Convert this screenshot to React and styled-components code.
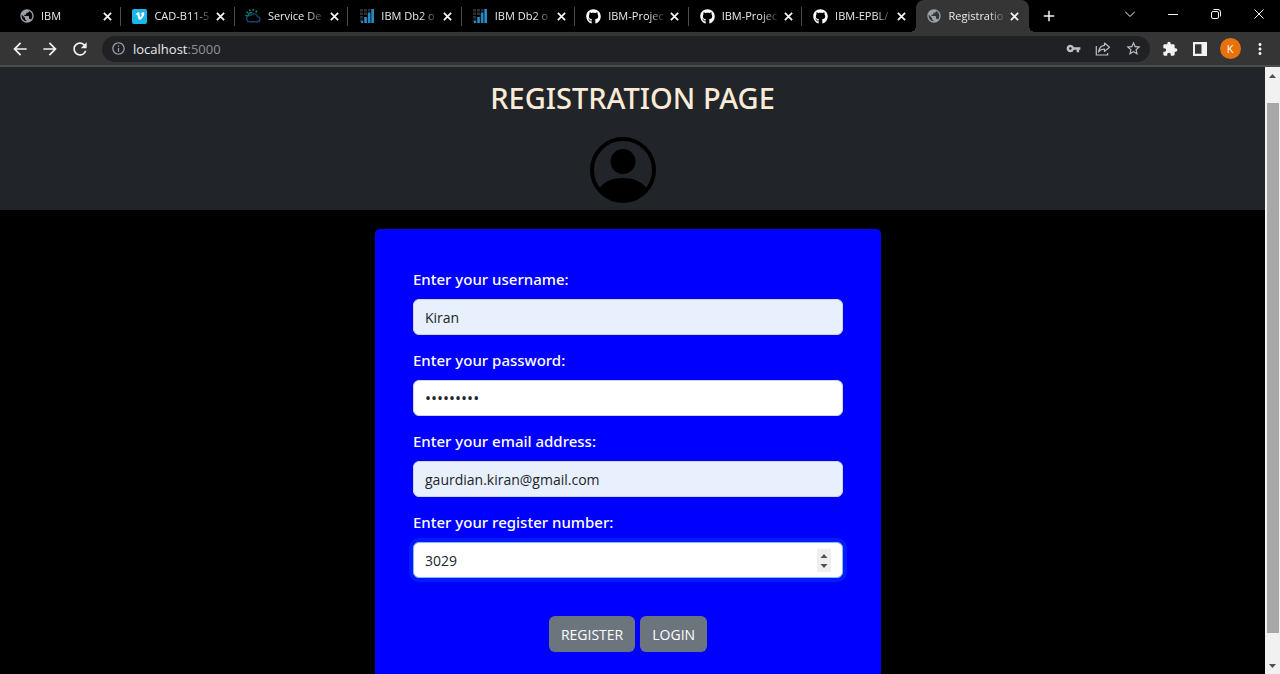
import React from "react";
import styled, { createGlobalStyle, css } from "styled-components";
import {
  MdArrowBack, MdArrowForward, MdRefresh, MdInfoOutline, MdVpnKey,
  MdStarBorder, MdExtension, MdPublic, MdMoreVert, MdAdd,
} from "react-icons/md";
import { FaGithub, FaVimeoV } from "react-icons/fa";

const GlobalStyle = createGlobalStyle`
  *, *::before, *::after { box-sizing: border-box; }
  body {
    margin: 0;
    background: #000;
    font-family: "Open Sans", "Noto Sans", sans-serif;
  }
  button, input { font: inherit; }
`;

const Browser = styled.div`
  display: flex;
  flex-direction: column;
  height: 100vh;
  overflow: hidden;
`;

/* Tab strip */
const TabStrip = styled.header`
  display: flex;
  flex: none;
  height: 32px;
  padding-left: 8px;
  background: #000;
`;

const Tabs = styled.div`
  display: flex;
  flex: 1;
  min-width: 0;
`;

const Tab = styled.div`
  position: relative;
  display: flex;
  flex: 1 1 0;
  min-width: 0;
  align-items: center;
  padding: 0 7px 0 11px;
  color: #e8eaed;
  ${(p) => !p.$active && !p.$last && css`
    &::after {
      content: "";
      position: absolute;
      right: 0;
      top: 7px;
      width: 1px;
      height: 19px;
      background: #4a4c50;
    }
  `}
  ${(p) => p.$active && css`
    background: #353535;
    border-radius: 8px 8px 0 0;
    &::before, &::after {
      content: "";
      position: absolute;
      bottom: 0;
      width: 6px;
      height: 6px;
    }
    &::before { left: -6px; background: radial-gradient(circle at 0 0, transparent 6px, #353535 6px); }
    &::after { right: -6px; background: radial-gradient(circle at 100% 0, transparent 6px, #353535 6px); }
  `}
`;

const TabIcon = styled.span`
  display: flex;
  flex: none;
  width: 15px;
  height: 15px;
  align-items: center;
  justify-content: center;
  color: ${(p) => p.$color};
  background: ${(p) => p.$bg || "transparent"};
  border-radius: 2px;
  svg { flex: none; }
`;

const TabTitle = styled.span`
  flex: 1;
  min-width: 0;
  margin: 0 1px 0 7px;
  font-size: 11px;
  line-height: 16px;
  white-space: nowrap;
  mask-image: linear-gradient(to right, #000 68%, transparent 100%);
`;

const IconButton = styled.button`
  display: flex;
  flex: none;
  align-items: center;
  justify-content: center;
  width: ${(p) => p.$w || 30}px;
  height: ${(p) => p.$h || 26}px;
  padding: 0;
  border: 0;
  background: none;
  color: ${(p) => p.$color || "#f1f3f4"};
`;

const WindowArea = styled.div`
  display: flex;
  flex: none;
  align-items: center;
  justify-content: space-between;
  width: 251px;
  padding-left: 5px;
`;

const WindowControls = styled.div`
  display: flex;
  height: 28px;
  align-self: flex-start;
`;

/* Toolbar */
const Toolbar = styled.nav`
  display: flex;
  flex: none;
  align-items: center;
  height: 35px;
  padding: 0 5px;
  background: #353535;
  border-bottom: 2px solid #4a4c4f;
`;

const AddressBar = styled.div`
  display: flex;
  flex: 1;
  align-items: center;
  height: 26px;
  margin: 0 5px 0 7px;
  padding: 0 2px 0 9px;
  border-radius: 13px;
  background: #202124;
  color: #9aa0a6;
`;

const Address = styled.span`
  flex: 1;
  margin-left: 7px;
  font-size: 13px;
  line-height: 18px;
  color: #8d9196;
`;

const Host = styled.span`
  color: #e8eaed;
`;

const Avatar = styled.span`
  display: flex;
  align-items: center;
  justify-content: center;
  width: 21px;
  height: 21px;
  border-radius: 50%;
  background: #e8710a;
  color: #fff;
  font-size: 11px;
`;

/* Page */
const Viewport = styled.div`
  display: flex;
  flex: 1;
  min-height: 0;
`;

const Page = styled.div`
  flex: 1;
  min-width: 0;
  overflow-y: auto;
  scrollbar-width: none;
  background: #000;
`;

const Banner = styled.header`
  display: flex;
  flex-direction: column;
  align-items: center;
  padding: 11px 0 7px;
  background: #212529;
`;

const Title = styled.h1`
  margin: 0;
  color: antiquewhite;
  font-family: "Noto Sans", sans-serif;
  font-size: 29px;
  font-weight: 500;
  line-height: 40px;
`;

const UserMark = styled.svg`
  display: block;
  width: 66px;
  height: 66px;
  margin: 19px 20px 0 0;
`;

const Main = styled.main`
  display: flex;
  justify-content: center;
  padding: 19px 9px 19px 0;
`;

const Card = styled.form`
  width: 506px;
  max-width: 100%;
  padding: 40px 38px 38px;
  border-radius: 5px;
  background: #00f;
`;

const Field = styled.div`
  display: flex;
  flex-direction: column;
  gap: 10px;
  margin-bottom: 15px;
`;

const Label = styled.label`
  color: #fff;
  font-family: "Noto Sans", sans-serif;
  font-size: 15px;
  font-weight: 500;
  line-height: 20px;
`;

const spinner = `url("data:image/svg+xml,%3Csvg xmlns='http://www.w3.org/2000/svg' viewBox='0 0 14 23'%3E%3Cpath fill='%23505050' d='M3.500 9L7 5l3.500 4zM3.500 15L7 19l3.500-4z'/%3E%3C/svg%3E")`;

const Input = styled.input`
  width: 100%;
  height: 36px;
  padding: 0 11px;
  border: 1px solid ${(p) => (p.$focused ? "#86b7fe" : "#ced4da")};
  border-radius: 6px;
  outline: 0;
  background: ${(p) => (p.$filled ? "#e8f0fe" : "#fff")};
  box-shadow: ${(p) => (p.$focused ? "0 0 0 4px rgba(13, 110, 253, 0.25)" : "none")};
  color: #212529;
  font-size: ${(p) => (p.type === "password" ? 16 : 14)}px;

  &::-webkit-inner-spin-button {
    appearance: none;
    width: 14px;
    height: 23px;
    opacity: 1;
    background: #efefef ${spinner} center / 14px 23px no-repeat;
  }
`;

const Actions = styled.div`
  display: flex;
  justify-content: center;
  gap: 5px;
  padding-top: 23px;
`;

const Action = styled.button`
  height: 36px;
  padding: 0 12px;
  border: 0;
  border-radius: 6px;
  background: #6c757d;
  color: #fff;
  font-size: 14px;
`;

const ScrollTrack = styled.div`
  display: flex;
  flex: none;
  flex-direction: column;
  width: 15px;
  background: #f1f1f1;
`;

const ScrollArrow = styled.button`
  display: flex;
  flex: none;
  align-items: center;
  justify-content: center;
  height: 17px;
  padding: 0;
  border: 0;
  background: none;
`;

const ScrollSpace = styled.div`
  flex: ${(p) => p.$share} 0 0;
`;

const ScrollThumb = styled.div`
  flex: 530 0 0;
  margin: 0 1px 0 2px;
  background: #a8a8a8;
`;

const CloudIcon = () => (
  <svg width="16" height="14" viewBox="0 0 16 14" fill="none" strokeWidth="1.4">
    <path d="M4.200 12.800h8a2.600 2.600 0 0 0 .3-5.200 3.800 3.800 0 0 0-6.800-1.200A3.200 3.200 0 0 0 4.200 12.800z" stroke="#14446f" />
    <path d="M2.800 6.800a4 4 0 0 1 4.400-3.200" stroke="#14716d" />
    <path d="M.4 6.600h1.400M1.500 2.800l1.200 1M4.500.4l.6 1.500M8.500.2L8 1.800M12 2l-1.400 1.200" stroke="#159a84" />
  </svg>
);

const Db2Icon = () => (
  <svg width="14" height="14" viewBox="0 0 14 14">
    <path fill="#2c3036" d="M0 0h3v2.500H0zM4 0h3v2.500H4zM8 0h2.500v2.500H8zM0 3.500h3V6H0zM4 3.500h3V6H4zM0 7h3v2.500H0zM0 10.500h3V13H0z" />
    <path fill="#2789c0" d="M11.300 0H14v14h-2.700zM7.800 3.500h2.700V14H7.800zM4.200 8h2.700v6H4.200zM1 12h2.200v2H1z" />
  </svg>
);

const ShareIcon = () => (
  <svg width="16" height="14" viewBox="0 0 16 14" fill="none" stroke="currentColor" strokeWidth="1.2">
    <path d="M1.300 4v9h11.400v-2" />
    <path strokeLinejoin="round" d="M9.500 1l5 4.200-5 4.200V7C7 7 5 7.800 3.500 10 4 6.500 6 3.700 9.500 3.300z" />
  </svg>
);

const PanelIcon = () => (
  <svg width="14" height="14" viewBox="0 0 14 14">
    <path fill="currentColor" fillRule="evenodd" d="M0 0h14v14H0zM2 2.200v9.600h6.500V2.200z" />
  </svg>
);

const LineIcon = ({ d, size = 10, weight = 1 }) => (
  <svg width={size} height={size} viewBox="0 0 10 10" fill="none" stroke="currentColor" strokeWidth={weight}>
    <path d={d} />
  </svg>
);

const Triangle = ({ d }) => (
  <svg width="7" height="4" viewBox="0 0 7 4" fill="#505050"><path d={d} /></svg>
);

const globe = { color: "#9aa0a6", icon: <MdPublic size={16} /> };
const db2 = { icon: <Db2Icon /> };
const github = { color: "#fff", icon: <FaGithub size={15} /> };

const tabs = [
  { title: "IBM", ...globe },
  { title: "CAD-B11-5", color: "#fff", bg: "#1ab7ea", icon: <FaVimeoV size={10} /> },
  { title: "Service De", icon: <CloudIcon /> },
  { title: "IBM Db2 o", ...db2 },
  { title: "IBM Db2 o", ...db2 },
  { title: "IBM-Projec", ...github },
  { title: "IBM-Projec", ...github },
  { title: "IBM-EPBL/", ...github },
  { title: "Registratio", active: true, ...globe },
];

const fields = [
  { id: "username", label: "Enter your username:", type: "text", value: "Kiran", filled: true },
  { id: "password", label: "Enter your password:", type: "password", value: "kiran3029" },
  { id: "email", label: "Enter your email address:", type: "email", value: "gaurdian.kiran@gmail.com", filled: true },
  { id: "regno", label: "Enter your register number:", type: "number", value: "3029", focused: true },
];

export default function App() {
  return (
    <Browser>
      <GlobalStyle />
      <TabStrip>
        <Tabs role="tablist">
          {tabs.map((t, i) => (
            <Tab key={i} role="tab" aria-selected={!!t.active} $active={t.active} $last={i === tabs.length - 2}>
              <TabIcon $color={t.color} $bg={t.bg}>{t.icon}</TabIcon>
              <TabTitle>{t.title}</TabTitle>
              <IconButton $w={14} $h={16} aria-label="Close tab">
                <LineIcon size={9} weight={2} d="M1 1l8 8M9 1L1 9" />
              </IconButton>
            </Tab>
          ))}
        </Tabs>
        <WindowArea>
          <IconButton aria-label="New tab"><MdAdd size={18} /></IconButton>
          <WindowControls>
            <IconButton $w={43} $h={28} aria-label="Search tabs"><LineIcon d="M0 2.500L5 7.500 10 2.500" /></IconButton>
            <IconButton $w={43} $h={28} aria-label="Minimize"><LineIcon d="M0 5.500H10" /></IconButton>
            <IconButton $w={43} $h={28} aria-label="Restore"><LineIcon d="M2 2.500h4a1.500 1.500 0 0 1 1.500 1.500v4a1.500 1.500 0 0 1-1.500 1.500H2A1.500 1.500 0 0 1 .5 8V4A1.500 1.500 0 0 1 2 2.500zM2.500.5H7A2.500 2.500 0 0 1 9.500 3v4.500" /></IconButton>
            <IconButton $w={43} $h={28} aria-label="Close"><LineIcon d="M.5.5l9 9M9.500.5l-9 9" /></IconButton>
          </WindowControls>
        </WindowArea>
      </TabStrip>

      <Toolbar>
        <IconButton aria-label="Back"><MdArrowBack size={20} /></IconButton>
        <IconButton aria-label="Forward"><MdArrowForward size={20} /></IconButton>
        <IconButton aria-label="Reload"><MdRefresh size={20} /></IconButton>
        <AddressBar>
          <MdInfoOutline size={15} />
          <Address><Host>localhost</Host>:5000</Address>
          <IconButton $color="#bdc1c6" aria-label="Passwords"><MdVpnKey size={15} /></IconButton>
          <IconButton $color="#bdc1c6" aria-label="Share"><ShareIcon /></IconButton>
          <IconButton $color="#bdc1c6" aria-label="Bookmark"><MdStarBorder size={17} /></IconButton>
        </AddressBar>
        <IconButton aria-label="Extensions"><MdExtension size={16} /></IconButton>
        <IconButton aria-label="Side panel"><PanelIcon /></IconButton>
        <IconButton aria-label="Profile"><Avatar>K</Avatar></IconButton>
        <IconButton aria-label="Menu"><MdMoreVert size={18} /></IconButton>
      </Toolbar>

      <Viewport>
        <Page>
          <Banner>
            <Title>REGISTRATION PAGE</Title>
            <UserMark viewBox="0 0 66 66">
              <circle cx="33" cy="33" r="31" fill="none" stroke="#000" strokeWidth="4" />
              <circle cx="33" cy="24.500" r="12.500" />
              <path d="M9 51.500C14.500 44 23 41 33 41s18.500 3 24 10.500A31 31 0 0 1 9 51.500z" />
            </UserMark>
          </Banner>
          <Main>
            <Card onSubmit={(e) => e.preventDefault()}>
              {fields.map((f) => (
                <Field key={f.id}>
                  <Label htmlFor={f.id}>{f.label}</Label>
                  <Input id={f.id} type={f.type} defaultValue={f.value} $filled={f.filled} $focused={f.focused} />
                </Field>
              ))}
              <Actions>
                <Action type="submit">REGISTER</Action>
                <Action type="button">LOGIN</Action>
              </Actions>
            </Card>
          </Main>
        </Page>
        <ScrollTrack>
          <ScrollArrow aria-label="Scroll up"><Triangle d="M0 4L3.500 0 7 4z" /></ScrollArrow>
          <ScrollSpace $share={19} />
          <ScrollThumb />
          <ScrollSpace $share={24} />
          <ScrollArrow aria-label="Scroll down"><Triangle d="M0 0L3.500 4 7 0z" /></ScrollArrow>
        </ScrollTrack>
      </Viewport>
    </Browser>
  );
}
